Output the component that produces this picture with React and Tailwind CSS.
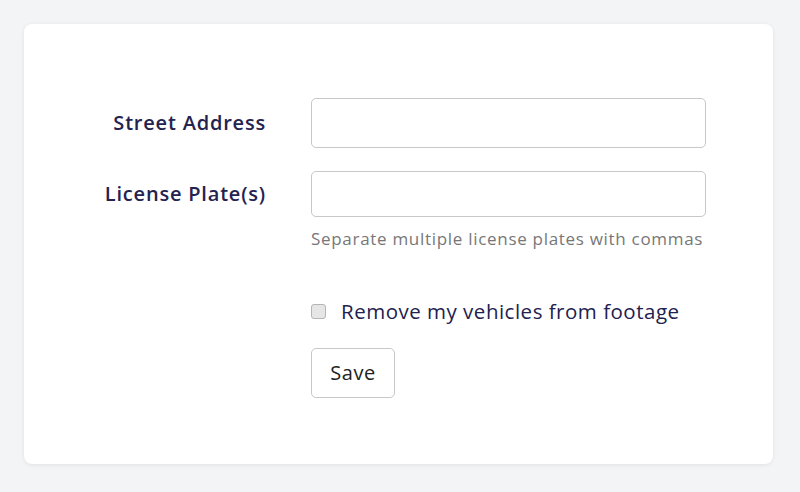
import React from 'react';

function Field({ label, height, hint }) {
  return (
    <div className="flex items-start">
      <label className="w-[242px] shrink-0 text-right text-[20px] font-semibold tracking-[0.8px] text-[#24234f]" style={{ lineHeight: `${height}px` }}>
        {label}
      </label>
      <div className="ml-[45px] w-[395px]">
        <input
          type="text"
          className={`block w-full rounded-[5px] border border-[#c8c8c8] bg-white px-3 outline-none ${height === 50 ? 'h-[50px]' : 'h-[46px]'}`}
        />
        {hint && <div className="mt-[10px] text-[17px] leading-[24px] tracking-[0.7px] text-[#777]">{hint}</div>}
      </div>
    </div>
  );
}

export default function App() {
  return (
    <div className="min-h-[492px] bg-[#f3f4f6] p-6 font-['Open_Sans',sans-serif]">
      <div className="h-[440px] w-[749px] rounded-lg bg-white pt-[74px] shadow-[0_1px_4px_rgba(0,0,0,0.08)]">
        <div className="flex flex-col gap-[23px]">
          <Field label="Street Address" height={50} />
          <Field label="License Plate(s)" height={46} hint="Separate multiple license plates with commas" />
        </div>
        <div className="ml-[287px] mt-[45px]">
          <label className="flex h-[30px] items-center gap-[15px] text-[20.5px] tracking-[0.5px] text-[#22214f]">
            <span className="h-[15px] w-[15px] rounded-[3px] border border-[#b5b5b5] bg-[#e6e6e6]" />
            Remove my vehicles from footage
          </label>
          <button className="mt-[22px] h-[50px] w-[84px] rounded-[5px] border border-[#c8c8c8] bg-white text-[20px] tracking-[0.5px] text-[#222]">
            Save
          </button>
        </div>
      </div>
    </div>
  );
}
